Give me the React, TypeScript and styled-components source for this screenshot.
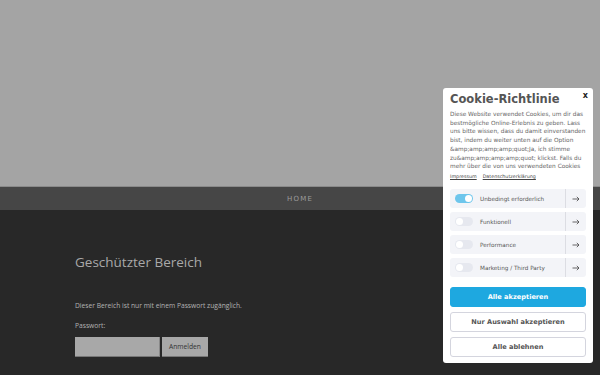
import React from 'react'
import styled, { createGlobalStyle } from 'styled-components'

const GlobalStyle = createGlobalStyle`
  html, body {
    margin: 0;
    padding: 0;
    background: #282828;
    font-family: "Open Sans", "Noto Sans", sans-serif;
  }
  * { box-sizing: border-box; }
`

const Page = styled.div`
  width: 600px;
  height: 375px;
  overflow: hidden;
  position: relative;
  background: #282828;
`

const Hero = styled.div`
  height: 187px;
  background: #a4a4a4;
  border-bottom: 1px solid #8a8a8a;
`

const Nav = styled.nav`
  height: 23px;
  background: #464646;
  display: flex;
  align-items: center;
  justify-content: center;
`

const NavLink = styled.a`
  font-family: "DejaVu Sans", sans-serif;
  font-size: 7px;
  letter-spacing: 1.2px;
  color: #9c9c9c;
`

const Content = styled.main`
  padding: 43px 75px 0;
  display: flex;
  flex-direction: column;
`

const Heading = styled.h1`
  margin: 0;
  font-size: 13.5px;
  font-weight: 400;
  color: #a9a9a9;
  line-height: 18px;
`

const Text = styled.p`
  margin: 30px 0 0;
  font-size: 6.7px;
  color: #b4b4b4;
  line-height: 10px;
`

const Label = styled.label`
  margin-top: 10px;
  font-size: 6.7px;
  color: #b4b4b4;
  line-height: 10px;
`

const Form = styled.div`
  display: flex;
  gap: 2px;
  margin-top: 6px;
`

const Input = styled.div`
  width: 85px;
  height: 20px;
  background: #a8a8a8;
  border-bottom: 1px solid #777;
  border-right: 1px solid #888;
`

const Submit = styled.button`
  width: 46px;
  height: 20px;
  background: #a8a8a8;
  border: none;
  border-bottom: 1px solid #777;
  font-family: "Open Sans", sans-serif;
  font-size: 6.7px;
  color: #333;
  padding: 0;
`

const Modal = styled.div`
  position: absolute;
  left: 443px;
  top: 88px;
  width: 150px;
  height: 275px;
  background: #fff;
  border-radius: 3px;
  padding: 4px 7px 0;
  display: flex;
  flex-direction: column;
  font-family: "DejaVu Sans", sans-serif;
`

const Close = styled.div`
  position: absolute;
  right: 5px;
  top: 3px;
  font-size: 8px;
  font-weight: 700;
  color: #222;
`

const Title = styled.h2`
  margin: 0;
  font-size: 11.5px;
  font-weight: 700;
  color: #555;
  line-height: 15px;
`

const Body = styled.div`
  margin-top: 3px;
  height: 61px;
  overflow: hidden;
  font-size: 5.8px;
  line-height: 8.7px;
  color: #666;
  white-space: nowrap;
`

const Links = styled.div`
  display: flex;
  gap: 6px;
  margin-top: 2px;
  font-size: 4.8px;
  line-height: 8px;
`

const LinkText = styled.a`
  color: #444;
  text-decoration: underline;
`

const Categories = styled.div`
  display: flex;
  flex-direction: column;
  gap: 4px;
  margin-top: 8px;
`

const Row = styled.div`
  display: flex;
  align-items: center;
  height: 19px;
  background: #f3f4f8;
  border-radius: 3px;
`

const Switch = styled.span<{ $on?: boolean }>`
  position: relative;
  margin-left: 5px;
  width: 18px;
  height: 9px;
  border-radius: 5px;
  background: ${p => (p.$on ? '#6ec6ec' : '#e6e8ef')};
  &:after {
    content: '';
    position: absolute;
    top: 1px;
    left: ${p => (p.$on ? '10px' : '1px')};
    width: 7px;
    height: 7px;
    border-radius: 50%;
    background: #fff;
  }
`

const RowLabel = styled.span`
  flex: 1;
  margin-left: 7px;
  font-size: 5.7px;
  color: #555;
`

const Arrow = styled.span`
  width: 21px;
  height: 100%;
  border-left: 1px solid #dcdde3;
  display: flex;
  align-items: center;
  justify-content: center;
`

const Buttons = styled.div`
  display: flex;
  flex-direction: column;
  gap: 5px;
  margin-top: 10px;
`

const Btn = styled.button<{ $primary?: boolean }>`
  height: 20px;
  border-radius: 3px;
  border: 1px solid ${p => (p.$primary ? '#1ea8e0' : '#d4d5de')};
  background: ${p => (p.$primary ? '#1ea8e0' : '#fff')};
  color: ${p => (p.$primary ? '#fff' : '#555')};
  font-family: "DejaVu Sans", sans-serif;
  font-size: 6.6px;
  font-weight: 700;
  padding: 0;
`

const ArrowIcon = () => (
  <svg width="8" height="6" viewBox="0 0 8 6" fill="none" stroke="#444" strokeWidth="0.8">
    <path d="M0.5 3h6.5M4.8 0.8L7 3 4.8 5.2" />
  </svg>
)

const categories = [
  { label: 'Unbedingt erforderlich', on: true },
  { label: 'Funktionell' },
  { label: 'Performance' },
  { label: 'Marketing / Third Party' },
]

const bodyLines = [
  'Diese Website verwendet Cookies, um dir das',
  'bestmögliche Online-Erlebnis zu geben. Lass',
  'uns bitte wissen, dass du damit einverstanden',
  'bist, indem du weiter unten auf die Option',
  '&amp;amp;amp;amp;quot;Ja, ich stimme',
  'zu&amp;amp;amp;amp;quot; klickst. Falls du',
  'mehr über die von uns verwendeten Cookies',
]

const App = () => {
  return (
    <Page>
      <GlobalStyle />
      <Hero />
      <Nav>
        <NavLink>HOME</NavLink>
      </Nav>
      <Content>
        <Heading>Geschützter Bereich</Heading>
        <Text>Dieser Bereich ist nur mit einem Passwort zugänglich.</Text>
        <Label>Passwort:</Label>
        <Form>
          <Input />
          <Submit>Anmelden</Submit>
        </Form>
      </Content>
      <Modal>
        <Close>x</Close>
        <Title>Cookie-Richtlinie</Title>
        <Body>
          {bodyLines.map((line, i) => (
            <div key={i}>{line}</div>
          ))}
        </Body>
        <Links>
          <LinkText>Impressum</LinkText>
          <LinkText>Datenschutzerklärung</LinkText>
        </Links>
        <Categories>
          {categories.map(c => (
            <Row key={c.label}>
              <Switch $on={c.on} />
              <RowLabel>{c.label}</RowLabel>
              <Arrow>
                <ArrowIcon />
              </Arrow>
            </Row>
          ))}
        </Categories>
        <Buttons>
          <Btn $primary>Alle akzeptieren</Btn>
          <Btn>Nur Auswahl akzeptieren</Btn>
          <Btn>Alle ablehnen</Btn>
        </Buttons>
      </Modal>
    </Page>
  )
}

export default App
